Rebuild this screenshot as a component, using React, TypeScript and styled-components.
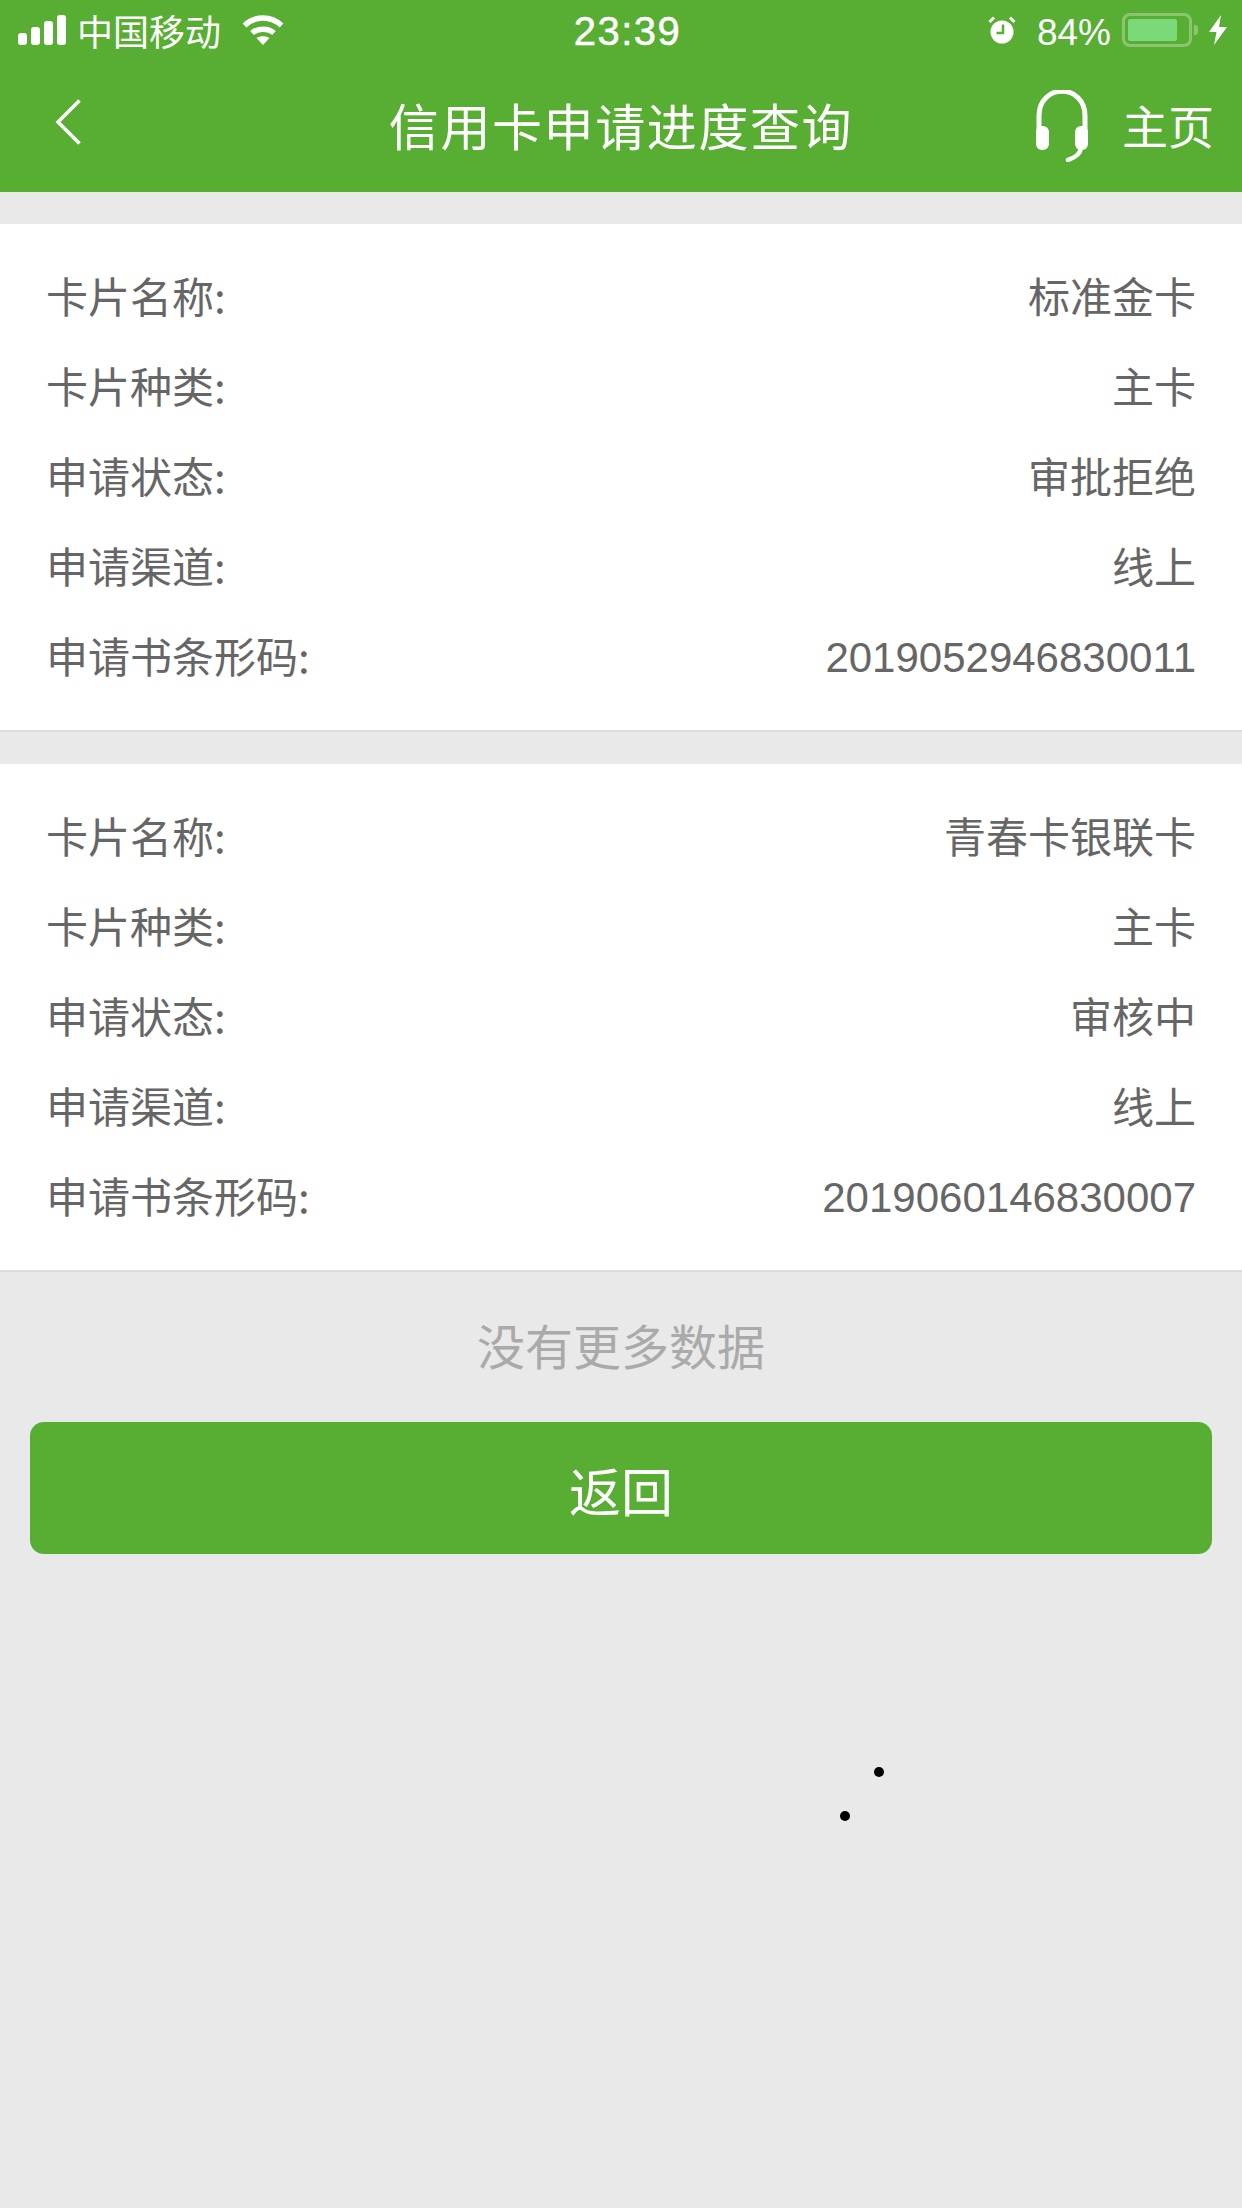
import styled, { createGlobalStyle } from 'styled-components';

const GlobalStyle = createGlobalStyle`
  html, body {
    margin: 0;
    padding: 0;
    background: #e9e9e9;
  }
  * {
    box-sizing: border-box;
  }
`;

const Page = styled.div`
  position: relative;
  width: 1242px;
  height: 2208px;
  background: #e9e9e9;
  overflow: hidden;
  font-family: "Noto Sans CJK SC", "Liberation Sans", sans-serif;
`;

const Header = styled.header`
  background: #58ae33;
  height: 192px;
  color: #fff;
  display: flex;
  flex-direction: column;
`;

const StatusBar = styled.div`
  height: 60px;
  padding: 0 15px 0 18px;
  display: grid;
  grid-template-columns: 1fr auto 1fr;
  align-items: center;
  font-family: "Liberation Sans", "Noto Sans CJK SC", sans-serif;
`;

const StatusGroup = styled.div<{ $end?: boolean }>`
  display: flex;
  align-items: center;
  gap: 11px;
  justify-content: ${(p) => (p.$end ? 'flex-end' : 'flex-start')};
`;

const Carrier = styled.span`
  font-family: "Noto Sans CJK SC", sans-serif;
  font-size: 36px;
  line-height: 60px;
  margin-right: 10px;
`;

const Clock = styled.span`
  font-size: 40px;
  letter-spacing: 1.5px;
  padding: 2px 0 0 10px;
  -webkit-text-stroke: 0.5px #fff;
`;

const Percent = styled.span`
  font-size: 37px;
  margin-left: 10px;
  padding-top: 5px;
`;

const NavBar = styled.div`
  flex: 1;
  display: grid;
  grid-template-columns: 1fr auto 1fr;
  align-items: center;
  padding: 0 28px 4px;
`;

const BackLink = styled.div`
  display: flex;
  margin: 0 0 4px 27px;
`;

const Title = styled.h1`
  margin: 0;
  font-size: 50px;
  font-weight: 400;
  letter-spacing: 1.6px;
`;

const HomeLink = styled.div`
  display: flex;
  align-items: center;
  justify-content: flex-end;
  gap: 34px;
  font-size: 46px;

  svg {
    margin-top: 3px;
  }
`;

const Card = styled.section`
  background: #fff;
  margin-top: 32px;
  height: 508px;
  padding: 25px 46px 0;
  border-bottom: 2px solid #dcdcdc;
`;

const Row = styled.div`
  height: 90px;
  display: flex;
  align-items: center;
  justify-content: space-between;
  font-size: 42px;
  color: #666;
`;

const Value = styled.span<{ $digits?: boolean }>`
  font-family: "Liberation Sans", "Noto Sans CJK SC", sans-serif;
  padding-top: ${(p) => (p.$digits ? '8px' : '0')};
`;

const NoMore = styled.div`
  height: 146px;
  display: flex;
  align-items: center;
  justify-content: center;
  font-size: 48px;
  color: #aaa;
  padding-bottom: 2px;
  margin-bottom: 4px;
`;

const BackButton = styled.button`
  display: block;
  width: 1182px;
  height: 132px;
  margin: 0 auto;
  padding: 2px 0 0;
  border: none;
  border-radius: 14px;
  background: #58ae33;
  color: #fff;
  font-family: inherit;
  font-size: 52px;
`;

const Dot = styled.span<{ $x: number; $y: number }>`
  position: absolute;
  left: ${(p) => p.$x}px;
  top: ${(p) => p.$y}px;
  width: 10px;
  height: 10px;
  border-radius: 50%;
  background: #000;
`;

const Battery = styled.div`
  position: relative;
  width: 70px;
  height: 34px;
  margin-right: 6px;
  border: 3px solid rgba(255, 255, 255, 0.3);
  border-radius: 8px;
  padding: 3px;
  display: flex;

  &::after {
    content: '';
    position: absolute;
    right: -9px;
    top: 9px;
    width: 4px;
    height: 10px;
    border-radius: 0 3px 3px 0;
    background: rgba(255, 255, 255, 0.3);
  }
`;

const BatteryFill = styled.div`
  background: #7bd97a;
  border-radius: 2px;
  height: 100%;
`;

const Signal = () => (
  <svg width="48" height="30" viewBox="0 0 48 30" fill="#fff">
    <rect x="0" y="18" width="9" height="12" rx="3" />
    <rect x="13" y="12" width="9" height="18" rx="3" />
    <rect x="26" y="6" width="9" height="24" rx="3" />
    <rect x="39" y="0" width="9" height="30" rx="3" />
  </svg>
);

const Wifi = () => (
  <svg width="42" height="30" viewBox="0 0 42 30" fill="none" stroke="#fff" strokeWidth="5.5">
    <path d="M2.5 10.5 C13 0.5 29 0.5 39.5 10.5" />
    <path d="M10 18 C16 13 26 13 32 18" />
    <path d="M21 30 L14.5 23 C18 20.5 24 20.5 27.5 23 Z" fill="#fff" stroke="none" />
  </svg>
);

const Alarm = () => (
  <svg width="28" height="28" viewBox="0 0 28 28">
    <circle cx="14" cy="16" r="11.5" fill="#fff" />
    <path d="M15 8.5 V17 H8.5" stroke="#58ae33" strokeWidth="2.5" fill="none" />
    <path d="M1.5 6 L6 1.5 M26.5 6 L22 1.5" stroke="#fff" strokeWidth="3" />
  </svg>
);

const Bolt = () => (
  <svg width="18" height="30" viewBox="0 0 18 30" fill="#fff">
    <path d="M12 0 L0 17 H7.5 L5 30 L18 12 H10 Z" />
  </svg>
);

const BackArrow = () => (
  <svg width="26" height="46" viewBox="0 0 26 46" fill="none" stroke="#fff" strokeWidth="3.5">
    <path d="M24.5 1.5 L3 23 L24.5 44.5" />
  </svg>
);

const Headset = () => (
  <svg width="52" height="72" viewBox="0 0 52 72" fill="none" stroke="#fff">
    <path d="M3 45 V26 C3 -7 49 -7 49 26 V45" strokeWidth="5" />
    <rect x="0" y="36" width="13" height="24" rx="6" fill="#fff" stroke="none" />
    <rect x="39" y="36" width="13" height="24" rx="6" fill="#fff" stroke="none" />
    <path d="M45 58 C44 65 38 68 32 70" strokeWidth="4.5" strokeLinecap="round" />
  </svg>
);

const cards = [
  [
    ['卡片名称:', '标准金卡'],
    ['卡片种类:', '主卡'],
    ['申请状态:', '审批拒绝'],
    ['申请渠道:', '线上'],
    ['申请书条形码:', '2019052946830011'],
  ],
  [
    ['卡片名称:', '青春卡银联卡'],
    ['卡片种类:', '主卡'],
    ['申请状态:', '审核中'],
    ['申请渠道:', '线上'],
    ['申请书条形码:', '2019060146830007'],
  ],
];

const App = () => {
  return (
    <Page>
      <GlobalStyle />
      <Header>
        <StatusBar>
          <StatusGroup>
            <Signal />
            <Carrier>中国移动</Carrier>
            <Wifi />
          </StatusGroup>
          <Clock>23:39</Clock>
          <StatusGroup $end>
            <Alarm />
            <Percent>84%</Percent>
            <Battery>
              <BatteryFill style={{ width: '84%' }} />
            </Battery>
            <Bolt />
          </StatusGroup>
        </StatusBar>
        <NavBar>
          <BackLink>
            <BackArrow />
          </BackLink>
          <Title>信用卡申请进度查询</Title>
          <HomeLink>
            <Headset />
            主页
          </HomeLink>
        </NavBar>
      </Header>
      {cards.map((rows, i) => (
        <Card key={i}>
          {rows.map(([label, value]) => (
            <Row key={label}>
              <span>{label}</span>
              <Value $digits={/^\d+$/.test(value)}>{value}</Value>
            </Row>
          ))}
        </Card>
      ))}
      <NoMore>没有更多数据</NoMore>
      <BackButton>返回</BackButton>
      <Dot $x={874} $y={1767} />
      <Dot $x={840} $y={1811} />
    </Page>
  );
};

export default App;
